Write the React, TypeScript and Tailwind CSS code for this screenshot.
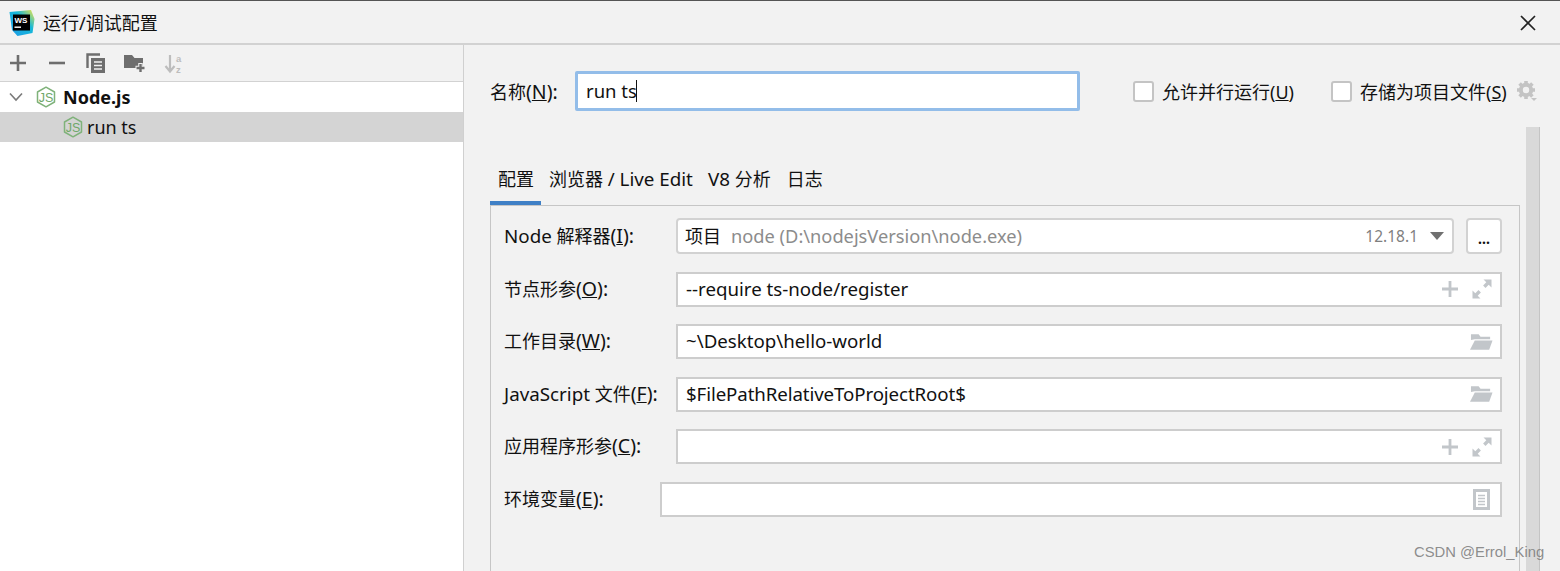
import { ReactNode } from "react";

const font = "font-['Noto_Sans','Noto_Sans_CJK_SC',sans-serif]";

function JsIcon({ className }: { className?: string }) {
  return (
    <svg viewBox="0 0 20 22" className={className} fill="none">
      <path d="M10 1.2 18.500 6v10L10 20.800 1.500 16V6z" stroke="#7fb27a" strokeWidth="1.500" strokeLinejoin="round" />
      <text x="10" y="15.500" textAnchor="middle" fontSize="12.500" fontFamily="'Liberation Sans',sans-serif" fill="#6fa86a">
        JS
      </text>
    </svg>
  );
}

function WsLogo() {
  return (
    <svg viewBox="0 0 26 26" className="h-[26px] w-[26px] shrink-0">
      <defs>
        <linearGradient id="ws" x1="0" y1="1" x2="1" y2="0">
          <stop offset="0" stopColor="#1e9be8" />
          <stop offset="0.6" stopColor="#16b8d8" />
          <stop offset="1" stopColor="#f5e642" />
        </linearGradient>
      </defs>
      <path d="M0.500 2 22 0l3.500 9-2 14-15 3-5.500-6z" fill="url(#ws)" />
      <rect x="4" y="4.500" width="17" height="16" fill="#000" />
      <text x="5.500" y="12.500" fontSize="8" fontWeight="700" fontFamily="'Liberation Sans',sans-serif" fill="#fff">
        WS
      </text>
      <rect x="5.500" y="16.500" width="6.500" height="1.400" fill="#fff" />
    </svg>
  );
}

function PlusExpand() {
  return (
    <div className="flex items-center gap-[14px]">
      <svg viewBox="0 0 16 16" className="h-4 w-4">
        <path d="M8 0v16M0 8h16" stroke="#c2c6ca" strokeWidth="2.800" />
      </svg>
      <svg viewBox="0 0 20 20" className="h-5 w-5">
        <path d="M11.500 0.500h8v8l-2.800-2.800-3.200 3.200-2.400-2.400 3.200-3.200zM8.500 19.500h-8v-8l2.800 2.800 3.200-3.200 2.400 2.400-3.200 3.200z" fill="#c2c6ca" />
      </svg>
    </div>
  );
}

function FolderIcon() {
  return (
    <svg viewBox="0 0 24 18" className="-mr-[1px] h-[18px] w-[23px]">
      <path d="M1 7V1h8l2 2.500h10V6H5z" fill="#c2c6ca" />
      <path d="M5 7.500h18.500L20 17H0z" fill="#c2c6ca" />
    </svg>
  );
}

function DocIcon() {
  return (
    <svg viewBox="0 0 17 21" className="mr-[2px] h-[21px] w-[17px]">
      <rect x="1.500" y="1.500" width="14" height="18" fill="#fff" stroke="#c2c6ca" strokeWidth="3" />
      <path d="M5 6.500h7M5 9.500h7M5 12.500h7M5 15.500h7" stroke="#c2c6ca" strokeWidth="1.300" />
    </svg>
  );
}

// latin runs render a little wider than the CJK ones in the reference
function Latin({ children }: { children: ReactNode }) {
  return <span className="text-[18.8px]">{children}</span>;
}

function Key({ k }: { k: string }) {
  return (
    <span className="text-[19.5px]">
      (<u>{k}</u>):
    </span>
  );
}

function Field({
  label,
  value,
  icon,
  wide,
  tight,
}: {
  label: ReactNode;
  value?: string;
  icon?: ReactNode;
  wide?: boolean;
  tight?: boolean;
}) {
  return (
    <div className="flex h-[35px] items-center">
      <div className={`${wide ? "w-[156px]" : "w-[172px]"} -mt-[1px] shrink-0 whitespace-nowrap`}>{label}</div>
      <div className="flex h-full flex-1 items-center justify-between border-2 border-[#cdcdcd] bg-white pl-[8px] pr-[8px]">
        <span className={`${tight ? "tracking-[-0.1px]" : ""} -mt-[1px] whitespace-nowrap text-[18.7px]`}>{value}</span>
        {icon}
      </div>
    </div>
  );
}

function Check({ label }: { label: ReactNode }) {
  return (
    <div className="flex items-center gap-[8px]">
      <div className="h-[21px] w-[21px] rounded-[3px] border-2 border-[#c4c4c4] bg-white" />
      <span className="whitespace-nowrap pt-[1px]">{label}</span>
    </div>
  );
}

export default function App() {
  return (
    <div className={`${font} relative flex h-[571px] w-[1560px] flex-col overflow-hidden bg-[#f2f2f2] text-[18px] leading-[24px] text-[#111]`}>
      {/* Title bar */}
      <div className="flex h-[45px] shrink-0 items-center justify-between border-t border-b-2 border-t-[#555] border-b-[#d2d2d2] pl-[9px] pr-[24px] pt-[1px]">
        <div className="flex items-center gap-[8px]">
          <WsLogo />
          <span>运行/调试配置</span>
        </div>
        <svg viewBox="0 0 16 16" className="h-4 w-4">
          <path d="M1 1l14 14M15 1 1 15" stroke="#222" strokeWidth="1.700" />
        </svg>
      </div>

      <div className="flex min-h-0 flex-1">
        {/* Left tree */}
        <div className="flex w-[464px] shrink-0 flex-col border-r border-[#d0d0d0] bg-white">
          <div className="flex h-[37px] shrink-0 items-center border-b border-[#d2d2d2] bg-[#f2f2f2] pl-[10px]">
            <svg viewBox="0 0 16 16" className="h-4 w-4">
              <path d="M8 0v16M0 8h16" stroke="#6e6e6e" strokeWidth="2.600" />
            </svg>
            <svg viewBox="0 0 16 16" className="ml-[23px] h-4 w-4">
              <path d="M0 8h16" stroke="#6e6e6e" strokeWidth="2.600" />
            </svg>
            <svg viewBox="0 0 20 20" className="ml-[21px] h-5 w-5">
              <path d="M1.500 15V1.500H14" fill="none" stroke="#6e6e6e" strokeWidth="2.400" />
              <rect x="5" y="5" width="14" height="15" fill="#6e6e6e" />
              <path d="M8 9h8M8 12.500h8M8 16h8" stroke="#f2f2f2" strokeWidth="1.400" />
            </svg>
            <svg viewBox="0 0 22 20" className="ml-[18px] h-5 w-[22px]">
              <path d="M0 2h8l2.500 3H19v10H0z" fill="#6e6e6e" />
              <path d="M16.500 10v10M11.500 15h10" stroke="#f2f2f2" strokeWidth="4.500" />
              <path d="M16.500 11v8M12.500 15h8" stroke="#6e6e6e" strokeWidth="2.400" />
            </svg>
            <svg viewBox="0 0 21 23" className="ml-[18px] h-[23px] w-[21px]">
              <path d="M6 3v15M1.500 14 6 19.500 10.500 14" fill="none" stroke="#bdbdbd" strokeWidth="2.200" />
              <text x="12" y="9.500" fontSize="9.500" fontFamily="'Liberation Sans',sans-serif" fontWeight="700" fill="#bdbdbd">
                a
              </text>
              <text x="12" y="20.500" fontSize="9.500" fontFamily="'Liberation Sans',sans-serif" fontWeight="700" fill="#bdbdbd">
                z
              </text>
            </svg>
          </div>
          <div className="flex h-[30px] items-center pl-[9px]">
            <svg viewBox="0 0 14 10" className="h-[10px] w-[14px]">
              <path d="M1 1.500 7 8l6-6.500" fill="none" stroke="#7a7a7a" strokeWidth="1.600" />
            </svg>
            <JsIcon className="ml-[13px] h-[22px] w-[20px]" />
            <span className="ml-[7px] font-bold">Node.js</span>
          </div>
          <div className="flex h-[30px] items-center bg-[#d4d4d4] pl-[63px]">
            <JsIcon className="h-[22px] w-[20px]" />
            <span className="ml-[4px]">run ts</span>
          </div>
        </div>

        {/* Right side */}
        <div className="flex min-w-0 flex-1 flex-col">
          <div className="flex h-[82px] shrink-0 items-start pl-[26px] pr-[21px] pt-[27px]">
            <span className="mt-[8px] w-[86px] shrink-0 whitespace-nowrap">
              名称
              <Key k="N" />
            </span>
            <div className="-ml-[1px] -mt-[1px] flex h-[40px] w-[505px] shrink-0 items-center rounded-[2px] border-[3px] border-[#93bde9] bg-white pl-[8px]">
              <span className="text-[18.500px]">run ts</span>
              <span className="-ml-[1px] h-[22px] w-px bg-[#111]" />
            </div>
            <div className="ml-[53px] mt-[7px]">
              <Check
                label={
                  <>
                    允许并行运行(<u>U</u>)
                  </>
                }
              />
            </div>
            <div className="ml-[37px] mt-[7px]">
              <Check
                label={
                  <>
                    存储为项目文件(<u>S</u>)
                  </>
                }
              />
            </div>
            <svg viewBox="0 0 22 22" className="ml-[9px] mt-[8px] h-[22px] w-[22px] shrink-0">
              <path d="M10 1v18M1 10h18M3.600 3.600l12.800 12.800M16.400 3.600 3.600 16.400" stroke="#c4c4c4" strokeWidth="3.600" />
              <circle cx="10" cy="10" r="5.500" fill="none" stroke="#c4c4c4" strokeWidth="3.400" />
              <circle cx="10" cy="10" r="3.200" fill="#f2f2f2" />
              <path d="M15 18h6l-3 3z" fill="#c4c4c4" />
            </svg>
          </div>

          <div className="flex min-h-0 flex-1 pl-[26px]">
            <div className="flex w-[1030px] shrink-0 flex-col">
              {/* Tabs */}
              <div className="mt-[37px] flex h-[41px] shrink-0 items-start">
                <div className="h-[41px] w-[51px] border-b-[4px] border-[#3f80c6] pl-[8px] pt-[3px]">配置</div>
                <div className="ml-[8px] flex gap-[15px] whitespace-nowrap pt-[3px]">
                  <span>
                    浏览器 <Latin>/ Live Edit</Latin>
                  </span>
                  <span>
                    <Latin>V8 </Latin>分析
                  </span>
                  <span className="ml-[1px]">日志</span>
                </div>
              </div>
              {/* Form panel */}
              <div className="flex flex-1 flex-col border-x border-t border-[#c6c6c6] pl-[13px] pr-[17px] pt-[12px]">
                <div className="flex h-[36px] items-center">
                  <div className="w-[172px] shrink-0 whitespace-nowrap">
                    <Latin>Node</Latin> 解释器
                    <Key k="I" />
                  </div>
                  <div className="flex h-full flex-1 items-center rounded-[4px] border-2 border-[#d2d2d2] bg-white pl-[7px] pr-[8px]">
                    <span>项目</span>
                    <span className="ml-[10px] text-[18.250px] text-[#8c8c8c]">node (D:\nodejsVersion\node.exe)</span>
                    <span className="ml-auto text-[15.500px] text-[#7f7f7f]">12.18.1</span>
                    <span className="ml-[12px] h-0 w-0 border-x-[7px] border-t-[8px] border-x-transparent border-t-[#707070]" />
                  </div>
                  <div className="ml-[12px] flex h-full w-[36px] shrink-0 items-end justify-center rounded-[4px] border-2 border-[#d2d2d2] bg-white pb-[5px] text-[14px] font-bold leading-[16px]">
                    ...
                  </div>
                </div>
                <div className="mt-[17.900px] flex flex-col gap-[17.500px]">
                  <Field
                    label={
                      <>
                        节点形参
                        <Key k="O" />
                      </>
                    }
                    value="--require ts-node/register"
                    icon={<PlusExpand />}
                  />
                  <Field
                    label={
                      <>
                        工作目录
                        <Key k="W" />
                      </>
                    }
                    value="~\Desktop\hello-world"
                    icon={<FolderIcon />}
                  />
                  <Field
                    tight
                    label={
                      <>
                        <Latin>JavaScript</Latin> 文件
                        <Key k="F" />
                      </>
                    }
                    value="$FilePathRelativeToProjectRoot$"
                    icon={<FolderIcon />}
                  />
                  <Field
                    label={
                      <>
                        应用程序形参
                        <Key k="C" />
                      </>
                    }
                    icon={<PlusExpand />}
                  />
                  <Field
                    wide
                    label={
                      <>
                        环境变量
                        <Key k="E" />
                      </>
                    }
                    icon={<DocIcon />}
                  />
                </div>
              </div>
            </div>
            <div className="ml-[6px] w-[14px] shrink-0 border-r border-[#c4c4c4] bg-[#d9d9d9]" />
          </div>
        </div>
      </div>

      {/* Watermark */}
      <span className="absolute left-[1414px] top-[543px] whitespace-nowrap font-['Liberation_Sans',sans-serif] text-[14.800px] leading-[18px] text-[#808080]/90">
        CSDN @Errol_King
      </span>
    </div>
  );
}
